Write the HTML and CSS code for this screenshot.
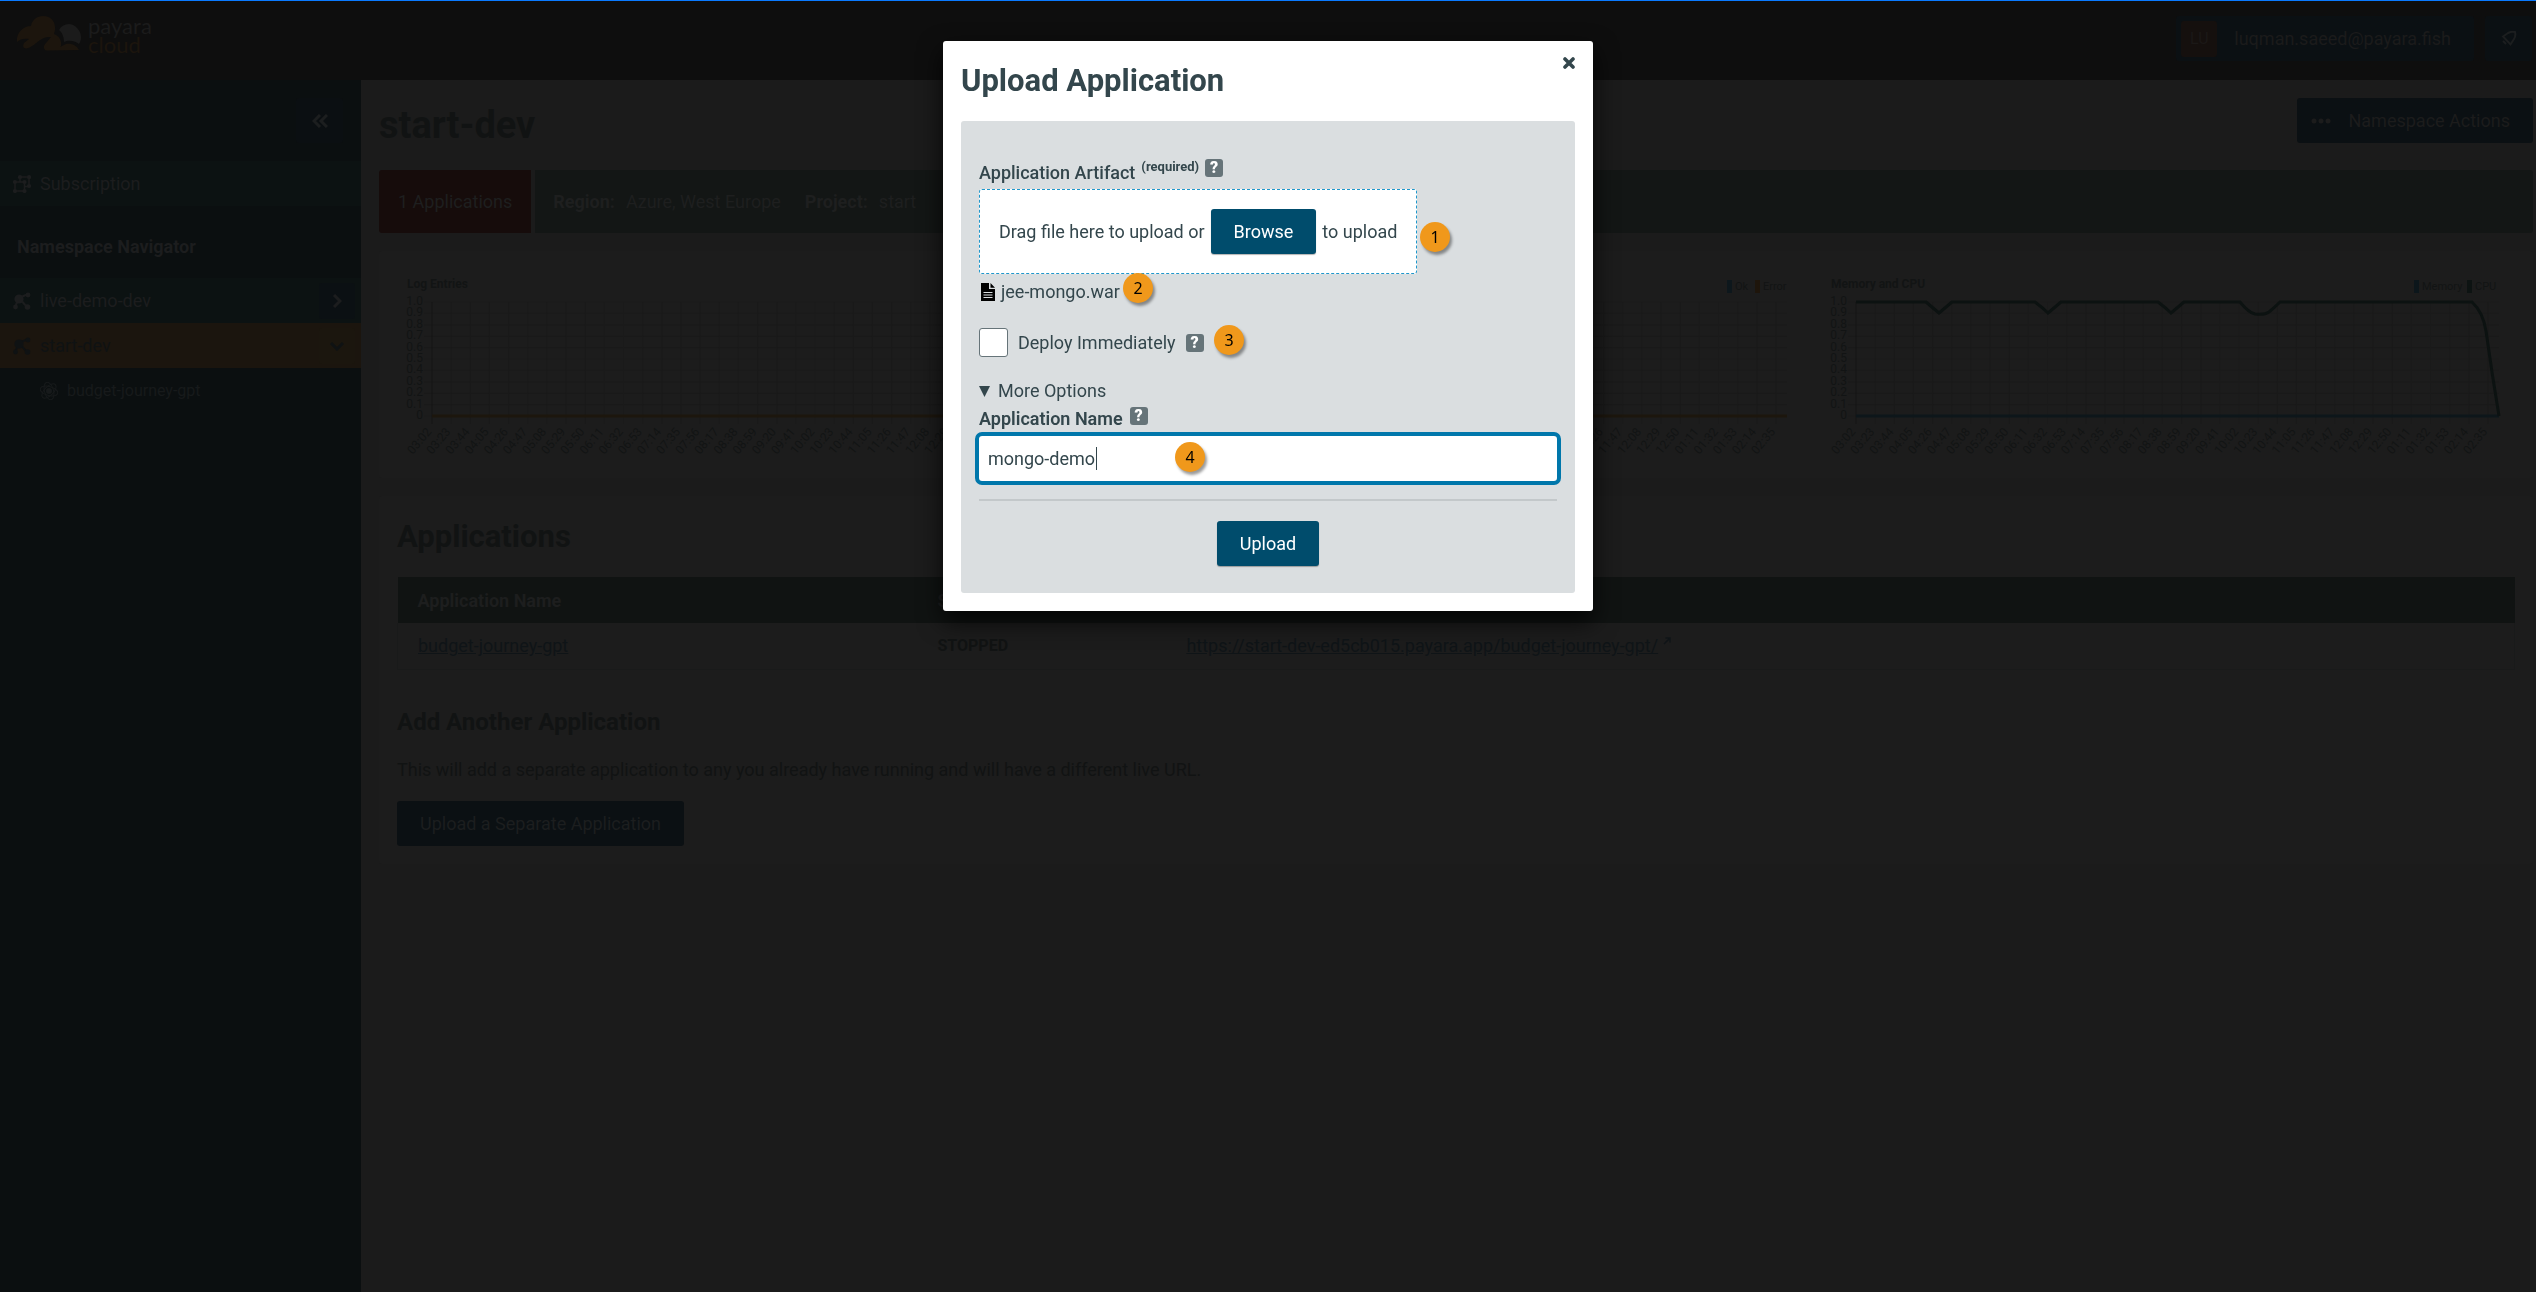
FILE: index.html
```html
<!DOCTYPE html>
<html lang="en">
<head>
<meta charset="utf-8">
<title>Payara Cloud – start-dev</title>
<link rel="stylesheet" href="styles.css">
</head>
<body>
<svg width="0" height="0" class="defs" aria-hidden="true">
  <symbol id="i-node" viewBox="0 0 18 18"><path d="M6 6 15 2M6 6 2 15M6 6l8 9" stroke="currentColor" stroke-width="2"/><circle cx="6" cy="7" r="4.600"/><circle cx="15" cy="3" r="2.400"/><circle cx="2.500" cy="15" r="2.400"/><circle cx="14.500" cy="15" r="2.800"/></symbol>
  <symbol id="i-group" viewBox="0 0 18 18"><path d="M2 7h9.500v9H2zM7 6.500V2h9v9.500h-4" fill="none" stroke="currentColor" stroke-width="1.500"/><circle cx="2" cy="7" r="2.100"/><circle cx="11.500" cy="7" r="2.100"/><circle cx="2" cy="16" r="2.100"/><circle cx="11.500" cy="16" r="2.100"/><circle cx="7" cy="2.200" r="2.100"/><circle cx="16" cy="2.200" r="2.100"/><circle cx="16" cy="11" r="2.100"/></symbol>
  <symbol id="i-atom" viewBox="0 0 18 18"><circle cx="9" cy="9" r="3"/><g fill="none" stroke="currentColor" stroke-width="1"><ellipse cx="9" cy="9" rx="9" ry="4.500" transform="rotate(15 9 9)"/><ellipse cx="9" cy="9" rx="9" ry="4.500" transform="rotate(75 9 9)"/><ellipse cx="9" cy="9" rx="9" ry="4.500" transform="rotate(135 9 9)"/></g></symbol>
</svg>

<header class="topbar">
  <a class="logo" href="#">
    <svg width="66" height="36" viewBox="16 16 66 36" aria-hidden="true">
      <path class="logo-cloud" d="M17 42C16 33 23 26 31 26C32 20 37 16 43 16C51 16 56 22 55 30L54 34C60 36 62 42 61 46L60 47L66 44C72 43 77 46 79 50L47 50.500C43 50 43 46 46 43L51 37C42 36 37 43 32 46C27 50 21 49 24 43L29 39C24 38 20 39 17 42Z"/>
      <path class="logo-sun" d="M59 30C63 23 72 22 77 28C82 33 82 40 79 44C74 40 68 40 64 42C64 37 62 32 59 30Z"/>
    </svg>
    <span class="wordmark"><span>payara</span><span class="accent">cloud</span></span>
  </a>
  <div class="account">
    <button class="btn user"><span class="avatar">LU</span>luqman.saeed@payara.fish</button>
    <button class="btn bell" aria-label="Notifications">
      <svg width="16" height="16" viewBox="0 0 16 16" aria-hidden="true"><path d="M2 5.500 7 2q4-2 7-1 1 4-1 7l-3.500 5.500zM2 10l3 3" fill="none" stroke="currentColor" stroke-width="2"/></svg>
    </button>
  </div>
</header>

<div class="shell">
  <nav class="sidebar">
    <button class="btn collapse" aria-label="Collapse">
      <svg width="16" height="14" viewBox="0 0 16 14" aria-hidden="true"><path d="M8 1 2 7l6 6M15 1 9 7l6 6" class="line"/></svg>
    </button>
    <a class="nav-row" href="#"><svg class="icon"><use href="#i-group"/></svg>Subscription</a>
    <h2 class="nav-title">Namespace Navigator</h2>
    <div class="nav-row">
      <svg class="icon"><use href="#i-node"/></svg><a href="#">live-demo-dev</a>
      <button class="toggle" aria-label="Expand"><svg width="10" height="14" viewBox="0 0 10 14" aria-hidden="true"><path d="m2 1 6 6-6 6" class="line"/></svg></button>
    </div>
    <div class="nav-row active">
      <svg class="icon"><use href="#i-node"/></svg><a href="#">start-dev</a>
      <button class="toggle" aria-label="Collapse"><svg width="14" height="10" viewBox="0 0 14 10" aria-hidden="true"><path d="m1 2 6 6 6-6" class="line"/></svg></button>
    </div>
    <a class="nav-row child" href="#"><svg class="icon"><use href="#i-atom"/></svg>budget-journey-gpt</a>
  </nav>

  <main>
    <div class="page-head">
      <h1>start-dev</h1>
      <button class="btn actions"><svg width="20" height="6" viewBox="0 0 20 6" aria-hidden="true"><circle cx="3" cy="3" r="2.500"/><circle cx="10" cy="3" r="2.500"/><circle cx="17" cy="3" r="2.500"/></svg>Namespace Actions</button>
    </div>
    <div class="summary-bar">
      <div class="count">1 Applications</div>
      <dl class="facts">
        <div><dt>Region:</dt><dd>Azure, West Europe</dd></div>
        <div><dt>Project:</dt><dd>start</dd></div>
      </dl>
    </div>

    <section class="card charts">
      <svg class="chart" viewBox="0 0 694 191" data-chart="log"></svg>
      <svg class="chart" viewBox="0 0 694 191" data-chart="requests"></svg>
      <svg class="chart" viewBox="0 0 694 191" data-chart="usage"></svg>
    </section>

    <section class="card">
      <h2>Applications</h2>
      <table>
        <thead><tr><th class="c-name">Application Name</th><th class="c-status">Status</th><th></th></tr></thead>
        <tbody><tr>
          <td><a href="#">budget-journey-gpt</a></td>
          <td class="status">STOPPED</td>
          <td><a href="#">https://start-dev-ed5cb015.payara.app/budget-journey-gpt/</a><svg class="ext" width="8" height="8" viewBox="0 0 8 8" aria-hidden="true"><path d="M1 7 7 1M2.500 1H7v4.500" fill="none" stroke="currentColor" stroke-width="1.500"/></svg></td>
        </tr></tbody>
      </table>
      <h3>Add Another Application</h3>
      <p>This will add a separate application to any you already have running and will have a different live URL.</p>
      <button class="btn">Upload a Separate Application</button>
    </section>
  </main>
</div>

<dialog open aria-labelledby="dlg-title">
  <button class="close" aria-label="Close"><svg width="12" height="12" viewBox="0 0 12 12" aria-hidden="true"><path d="m2 2 8 8M10 2l-8 8" fill="none" stroke="currentColor" stroke-width="3.600" stroke-linecap="round"/></svg></button>
  <h2 id="dlg-title">Upload Application</h2>
  <form class="panel">
    <div class="label-row artifact">
      <label for="browse">Application Artifact</label><sup>(required)</sup>
      <button type="button" class="help" aria-label="Help">?</button>
    </div>
    <div class="dropzone">
      <span>Drag file here to upload or</span>
      <button type="button" class="btn" id="browse">Browse</button>
      <span>to upload</span>
      <span class="badge b1">1</span>
    </div>
    <div class="file">
      <svg width="14" height="18" viewBox="0 0 14 18" aria-hidden="true"><path d="M0 0h8v6h6v12H0zM9.500 0 14 4.800H9.500z"/><path d="M2.500 9.500h9M2.500 12h9M2.500 14.500h9" stroke="#dadee0"/></svg>
      <span>jee-mongo.war</span>
      <span class="badge b2">2</span>
    </div>
    <div class="check">
      <input type="checkbox" id="deploy"><label for="deploy">Deploy Immediately</label>
      <button type="button" class="help" aria-label="Help">?</button>
      <span class="badge b3">3</span>
    </div>
    <details open>
      <summary><svg width="11" height="11" viewBox="0 0 11 11" aria-hidden="true"><path d="M0 0h11L5.500 11z"/></svg>More Options</summary>
      <div class="label-row">
        <label for="name">Application Name</label>
        <button type="button" class="help" aria-label="Help">?</button>
      </div>
      <div class="field">
        <input type="text" id="name" value="mongo-demo">
        <span class="caret"></span>
        <span class="badge b4">4</span>
      </div>
    </details>
    <hr>
    <button type="button" class="btn submit">Upload</button>
  </form>
</dialog>
<script src="charts.js"></script>
</body>
</html>
```
FILE: styles.css
```css
* { box-sizing: border-box; }

body {
  margin: 0;
  min-height: 100vh;
  display: flex;
  flex-direction: column;
  background: #1b1b1b;
  color: #111313;
  font: 18px/27px Roboto, "Open Sans", sans-serif;
}

h1, h2, h3, p, dl, dd { margin: 0; }
a { color: inherit; }
button, input { font: inherit; }
svg { fill: currentColor; flex: none; }
.defs { position: absolute; }
.line { fill: none; stroke: currentColor; stroke-width: 3px; }

.btn {
  height: 45px;
  padding: 0 23px;
  border: 0;
  border-radius: 3px;
  background: #0b1013;
  color: #1c1e1f;
  display: inline-flex;
  align-items: center;
}

/* Top bar */
.topbar {
  height: 80px;
  padding: 15px 4px 0 16px;
  border-top: 1px solid #0a7aff;
  background: #0e0e0e;
  display: flex;
  justify-content: space-between;
  align-items: flex-start;
}
.logo { display: flex; gap: 6px; text-decoration: none; }
.logo-cloud { fill: #1c150d; }
.logo-sun { fill: #1b1b1b; }
.wordmark {
  display: flex;
  flex-direction: column;
  color: #1b1b1b;
  font: 22px/19px Lato, sans-serif;
}
.accent { color: #1c150d; }
.account { display: flex; gap: 11px; }
.user { padding: 0 23px 0 5px; gap: 17px; color: #1b1b1b; }
.avatar {
  width: 36px;
  height: 36px;
  border-radius: 3px;
  background: #15100e;
  color: #1b1817;
  font-size: 16px;
  line-height: 36px;
}
.bell { width: 47px; justify-content: center; padding: 0; }

/* Sidebar */
.shell { flex: 1; display: flex; }
.sidebar {
  flex: none;
  width: 361px;
  background: #0b0f10;
  color: #1c1d1e;
}
.collapse {
  display: flex;
  justify-content: center;
  width: 47px;
  margin: 18px 18px 18px auto;
  padding: 0;
  background: #0b0f12;
}
.nav-row {
  display: flex;
  align-items: center;
  gap: 9px;
  height: 45px;
  padding: 0 6px 0 13px;
  background: #0c1212;
  text-decoration: none;
}
.nav-row a { flex: 1; text-decoration: none; }
.icon { width: 18px; height: 18px; }
.toggle {
  width: 36px;
  height: 36px;
  padding: 0;
  border: 0;
  border-radius: 3px;
  background: #0b1013;
  color: inherit;
  display: flex;
  align-items: center;
  justify-content: center;
}
.active { background: #1b150e; color: #0f1213; }
.active .toggle { background: #1b160e; }
.child { padding-left: 40px; background: none; font-size: 16px; color: #171a1b; }
.nav-title { padding: 9px 17px 0; font-size: 18px; line-height: 63px; }

/* Page */
main {
  flex: 1;
  padding: 18px 3px 18px 18px;
  display: flex;
  flex-direction: column;
  gap: 18px;
}
.page-head { display: flex; justify-content: space-between; align-items: flex-start; }
h1 { font-size: 38px; line-height: 54px; }
.actions { padding: 0 23px 0 14px; gap: 17px; color: #1c1c1c; }
.summary-bar { display: flex; gap: 4px; line-height: 63px; color: #1e1f1f; }
.count { padding: 0 19px; border-radius: 3px 0 0 3px; background: #160c0b; }
.facts {
  flex: 1;
  display: flex;
  gap: 24px;
  padding: 0 18px;
  border-radius: 0 3px 3px 0;
  background: #131615;
}
.facts div { display: flex; gap: 11px; }
dt { font-weight: 700; }

.card { padding: 18px; border-radius: 3px; background: #1c1c1c; }
.charts { display: grid; grid-template-columns: repeat(3, 1fr); gap: 18px; }
.chart { display: block; width: 100%; fill: #121414; font-size: 12px; }
.chart .title { font-weight: 700; }
.chart .legend { font-size: 11px; }
.chart .grid { stroke: #1a1a1a; }
.chart .axis { stroke: #151515; }

h2 { font-size: 31px; line-height: 45px; }
h3 { margin: 36px 0 18px; font-size: 24px; line-height: 32px; }
table {
  width: 100%;
  margin-top: 18px;
  border-collapse: collapse;
  table-layout: fixed;
}
tr { height: 46px; }
th { background: #101312; color: #1d1e1e; text-align: left; }
th, td { padding: 0 20px; }
tbody tr { border: 1px solid #191a1a; border-top: 0; }
td a { color: #0f1417; }
.c-name { width: 24.56%; }
.c-status { width: 11.76%; }
.status { font-size: 16px; font-weight: 700; }
.ext { margin-left: 5px; vertical-align: 7px; color: #0f1417; }
p { margin-bottom: 18px; }

/* Upload dialog */
dialog {
  position: fixed;
  inset: 0 0 auto;
  width: 650px;
  margin: 41px auto 0;
  padding: 18px;
  border: 0;
  border-radius: 3px;
  background: #fff;
  color: #33464c;
  box-shadow: 0 10px 25px rgba(0, 0, 0, 0.8);
}
dialog h2 { line-height: 44px; }
dialog .btn { background: #004c6c; color: #fff; box-shadow: 0 1px 1px rgba(0, 0, 0, 0.3); }
.close {
  position: absolute;
  top: 16px;
  right: 18px;
  padding: 0;
  border: 0;
  background: none;
  color: #33464c;
  display: flex;
}
.panel {
  margin-top: 18px;
  padding: 36px 18px 27px;
  border-radius: 3px;
  background: #dadee0;
  display: flex;
  flex-direction: column;
}
.label-row {
  display: flex;
  gap: 7px;
  align-items: flex-start;
  margin-bottom: 5px;
  font-weight: 600;
  line-height: 24px;
}
.artifact { height: 32px; margin-bottom: 0; padding-top: 2px; gap: 6px; font-weight: 500; line-height: 27px; }
sup { font-size: 13px; font-weight: 700; line-height: 16px; }
.help {
  width: 18px;
  height: 18px;
  padding: 0;
  border: 0;
  border-radius: 3px;
  background: #667479;
  color: #fff;
  font-size: 16px;
  font-weight: 900;
  line-height: 18px;
}
.dropzone {
  position: relative;
  align-self: flex-start;
  display: flex;
  align-items: center;
  gap: 6px;
  padding: 19px;
  border: 1px dashed #1f97cb;
  border-radius: 3px;
  background: #fff;
}
.file {
  position: relative;
  display: flex;
  align-items: center;
  gap: 6px;
  padding-left: 2px;
  line-height: 36px;
  margin-bottom: 18px;
}
.file svg { color: #000; }
.check {
  position: relative;
  display: flex;
  align-items: center;
  gap: 10px;
  margin-bottom: 18px;
}
.check input {
  appearance: none;
  width: 29px;
  height: 29px;
  margin: 0;
  border: 1px solid #667479;
  border-radius: 3px;
  background: #fff;
}
summary { display: flex; align-items: center; gap: 8px; line-height: 32px; }
.field { position: relative; }
.field input {
  display: block;
  width: 100%;
  height: 45px;
  padding: 0 9px;
  border: 0;
  border-radius: 3px;
  outline: 4px solid #0077ab;
  background: #fff;
  color: #33464c;
}
.caret { position: absolute; left: 117px; top: 11px; width: 1px; height: 23px; background: #33464c; }
hr { width: 100%; height: 2px; margin: 18px 0 20px; border: 0; background: #c3c8ca; }
.submit { align-self: center; }

.badge {
  position: absolute;
  width: 30px;
  height: 30px;
  border-radius: 50%;
  background: #f0981b;
  box-shadow: 2px 3px 3px rgba(0, 0, 0, 0.4);
  color: #000;
  font: 16px/30px "Noto Sans", sans-serif;
  text-align: center;
}
.b1 { left: 440px; top: 32px; }
.b2 { left: 144px; top: -1px; }
.b3 { left: 235px; top: -3px; }
.b4 { left: 196px; top: 6px; }
```
FILE: charts.js
```js
// Draws the namespace charts: title, legend, grid, tick labels and series.
const X0 = 35, X1 = 678, Y0 = 33, Y1 = 147, STEP = 19.15;
const charts = {
  log: { title: 'Log Entries', legend: [], series: [['#1c160d', 'M35 147H678']] },
  requests: {
    title: '',
    legend: [['#0d171c', 'Ok', 626], ['#1e150b', 'Error', 654]],
    series: [['#1c160d', 'M35 147H678']]
  },
  usage: {
    title: 'Memory and CPU',
    legend: [['#0c161b', 'Memory', 601], ['#0d1312', 'CPU', 654]],
    series: [
      ['#0d161a', 'M35 147H678'],
      ['#0c1211', 'M35 33H105Q112 39 118 44Q124 39 131 33H214Q222 39 227 44Q233 39 240 33H337Q345 39 350 44Q356 39 363 33H419Q428 44 434 45Q444 46 448 43Q453 39 459 33H651Q662 43 665 62Q671 105 678 147']
    ]
  }
};

function clock(i) {
  const m = 182 + 21 * i;
  const h = (Math.floor(m / 60) + 11) % 12 + 1;
  return String(h).padStart(2, '0') + ':' + String(m % 60).padStart(2, '0');
}

for (const el of document.querySelectorAll('[data-chart]')) {
  const c = charts[el.dataset.chart];
  let s = c.title && `<text class="title" x="10" y="19">${c.title}</text>`;
  for (const [color, name, x] of c.legend) {
    s += `<rect x="${x - 8}" y="11" width="5" height="13" fill="${color}"/><text class="legend" x="${x}" y="21">${name}</text>`;
  }
  for (let i = 0; i <= 10; i++) {
    const y = Y1 - (Y1 - Y0) * i / 10;
    const label = i === 0 ? '0' : (i / 10).toFixed(1);
    s += `<path class="grid" d="M${X0 - 8} ${y}H${X1}"/><text x="26" y="${y + 3}" text-anchor="end">${label}</text>`;
  }
  for (let i = 0; i < 34; i++) {
    const x = X0 + STEP * i;
    s += `<path class="${i ? 'grid' : 'axis'}" d="M${x} ${Y0}V${Y1 + 8}"/>`;
    s += `<text text-anchor="end" transform="translate(${x} 163) rotate(-50)">${clock(i)}</text>`;
  }
  for (const [color, d] of c.series) {
    s += `<path d="${d}" fill="none" stroke="${color}" stroke-width="3"/>`;
  }
  el.innerHTML = s;
}
```
